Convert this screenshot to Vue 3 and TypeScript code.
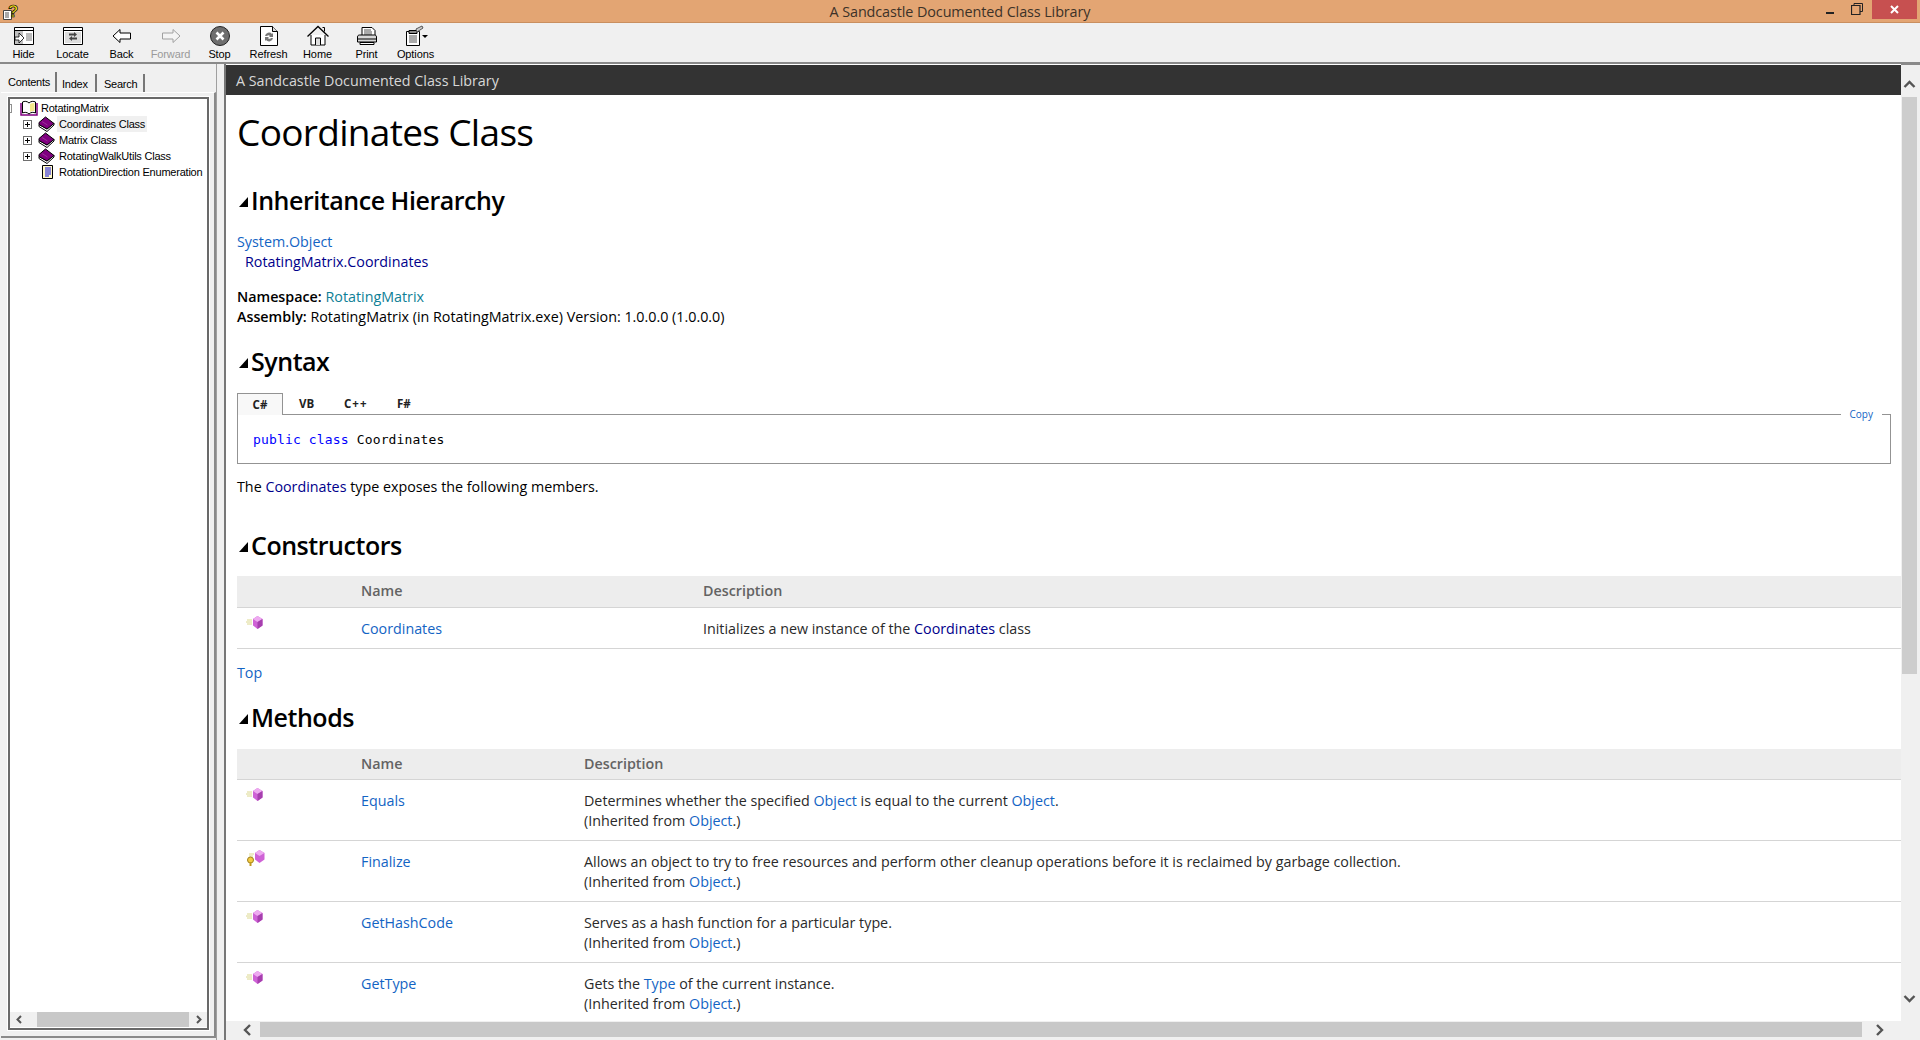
<script setup lang="ts">
interface ToolButton {
  label: string;
  icon: string;
  disabled?: boolean;
}

interface MethodRow {
  name: string;
  protectedMember?: boolean;
  parts: { text: string; link?: boolean }[];
}

const toolButtons: ToolButton[] = [
  { label: "Hide", icon: "hide" },
  { label: "Locate", icon: "locate" },
  { label: "Back", icon: "back" },
  { label: "Forward", icon: "forward", disabled: true },
  { label: "Stop", icon: "stop" },
  { label: "Refresh", icon: "refresh" },
  { label: "Home", icon: "home" },
  { label: "Print", icon: "print" },
  { label: "Options", icon: "options" }
];

const treeRows = [
  { label: "Coordinates Class", selected: true },
  { label: "Matrix Class", selected: false },
  { label: "RotatingWalkUtils Class", selected: false }
];

const methods: MethodRow[] = [
  {
    name: "Equals",
    parts: [
      { text: "Determines whether the specified " },
      { text: "Object", link: true },
      { text: " is equal to the current " },
      { text: "Object", link: true },
      { text: "." }
    ]
  },
  {
    name: "Finalize",
    protectedMember: true,
    parts: [{ text: "Allows an object to try to free resources and perform other cleanup operations before it is reclaimed by garbage collection." }]
  },
  {
    name: "GetHashCode",
    parts: [{ text: "Serves as a hash function for a particular type." }]
  },
  {
    name: "GetType",
    parts: [
      { text: "Gets the " },
      { text: "Type", link: true },
      { text: " of the current instance." }
    ]
  }
];
</script>

<template>
  <div class="window">
    <svg class="defs" width="0" height="0">
      <symbol id="member" viewBox="0 0 18 14">
        <path d="M1 5h5M0 7h6M1 9h5" stroke="#dcd890" stroke-width="1" fill="none" />
        <path d="M11.500 1L16.500 4v6.500L11.500 14 7 10.500V4z" fill="#cf62d6" />
        <path d="M11.500 1L16.500 4l-5 3L7 4z" fill="#eeaaf0" />
        <path d="M11.500 7L16.500 4v6.500L11.500 14z" fill="#a63fae" />
      </symbol>
      <symbol id="book" viewBox="0 0 17 16">
        <path d="M1 10.500l8 5 7-6.500V7L9 13 1 8.500z" fill="#fff" stroke="#000" stroke-width="1" stroke-linejoin="round" />
        <path d="M1 6.500L7.500 1 16 7.500 9 13 1 8.500z" fill="#800080" stroke="#000" stroke-width="1" stroke-linejoin="round" />
        <path d="M4 5.500l5.500 3.500" fill="none" stroke="#a040a0" stroke-width=".8" />
      </symbol>
    </svg>

    <header class="titlebar">
      <svg class="app-icon" width="18" height="18" viewBox="0 0 18 18">
        <path d="M2.500 7.500h8v9h-8z" fill="#fff" stroke="#444" />
        <path d="M4 10h4M4 12h4M4 14h4" stroke="#555" />
        <text x="7" y="14" class="q-mark">?</text>
      </svg>
      <span class="title-text">A Sandcastle Documented Class Library</span>
      <div class="win-controls">
        <svg width="10" height="4" viewBox="0 0 10 4" class="win-min"><path d="M1 2h8" stroke="#222" stroke-width="2" /></svg>
        <svg width="12" height="12" viewBox="0 0 12 12" class="win-max">
          <path d="M3 2.500V.5h8.500v8H9" fill="none" stroke="#222" />
          <path d="M.5 2.500h8.500v9H.5z" fill="none" stroke="#222" stroke-width="1.200" />
        </svg>
        <div class="win-close">
          <svg width="9" height="9" viewBox="0 0 9 9"><path d="M1 1l7 7M8 1l-7 7" stroke="#fff" stroke-width="2" /></svg>
        </div>
      </div>
    </header>

    <nav class="toolbar">
      <div v-for="btn in toolButtons" :key="btn.label" class="tool" :class="{ disabled: btn.disabled }">
        <svg width="24" height="24" viewBox="0 0 24 24" class="tool-icon">
          <g v-if="btn.icon === 'hide'">
            <path d="M2.500 3.500h19v17h-19z" fill="#fff" stroke="#000" />
            <path d="M2.500 6.500h19" stroke="#000" />
            <path d="M3 7h8v13H3z" fill="#c0c0c0" />
            <path d="M3 13h4V9l5 5-5 5v-3H3z" fill="#fff" stroke="#000" stroke-width=".8" />
            <path d="M14 10h6M14 12h6M14 14h6M14 16h6" stroke="#777" />
          </g>
          <g v-else-if="btn.icon === 'locate'">
            <path d="M2.500 3.500h19v17h-19z" fill="#fff" stroke="#000" />
            <path d="M2.500 6.500h19" stroke="#000" />
            <path d="M4 8h16v11H4z" fill="#dcdcdc" />
            <path d="M13 8l3 2.500-3 2.500v-1.500H8v-2h5zM11 12v1.500h5v2h-5V17l-3-2.500z" fill="#444" />
          </g>
          <path v-else-if="btn.icon === 'back'" d="M3 12l7-6.500V9h10.500v6H10v3.500z" fill="#fff" stroke="#000" />
          <path v-else-if="btn.icon === 'forward'" d="M21 12l-7-6.500V9H3.500v6H14v3.500z" fill="#f4f4f4" stroke="#a0a0a0" />
          <g v-else-if="btn.icon === 'stop'">
            <circle cx="12" cy="12" r="9.500" fill="#6e6e6e" stroke="#222" />
            <path d="M8.500 8.500l7 7M15.500 8.500l-7 7" stroke="#fff" stroke-width="2.600" />
          </g>
          <g v-else-if="btn.icon === 'refresh'">
            <path d="M3.500 2.500h12l5 5v14h-17z" fill="#fff" stroke="#000" />
            <path d="M15.500 2.500v5h5" fill="#ddd" stroke="#000" />
            <path d="M8 12a4 4 0 0 1 7-2l1-1v4h-4l1-1a2 2 0 0 0-3 0zM16 14a4 4 0 0 1-7 2l-1 1v-4h4l-1 1a2 2 0 0 0 3 0z" fill="#777" />
          </g>
          <g v-else-if="btn.icon === 'home'">
            <path d="M5 11v10h14V11" fill="#fff" stroke="#000" />
            <path d="M1.500 12.500L12 2.500l10.500 10" fill="none" stroke="#000" stroke-width="1.300" />
            <path d="M16.500 3.500h2v4" fill="none" stroke="#000" />
            <path d="M9.500 21v-7h5v7" fill="#ddd" stroke="#000" />
          </g>
          <g v-else-if="btn.icon === 'print'">
            <path d="M7 12V3.500h10l3 3V12z" fill="#fff" stroke="#000" />
            <path d="M9 6h7M9 8h8M9 10h8" stroke="#555" />
            <path d="M2.500 13c0-1.500 1-2 2-2h15c1 0 2 .5 2 2v5h-19z" fill="#d8d8d8" stroke="#000" />
            <path d="M3 15h18" stroke="#000" />
            <path d="M5 18.500h14v2H5z" fill="#fff" stroke="#000" />
          </g>
          <g v-else>
            <path d="M2.500 7.500h13v14h-13z" fill="#fff" stroke="#000" />
            <path d="M5 6.500h8v3H5z" fill="#888" stroke="#000" />
            <path d="M5 12h8M5 14h8M5 16h8M5 18h8" stroke="#555" />
            <path d="M12 5l6-3 1 2-6 4z" fill="#ccc" stroke="#555" />
            <path d="M18 11h6l-3 3z" fill="#000" />
          </g>
        </svg>
        <span class="tool-label">{{ btn.label }}</span>
      </div>
    </nav>

    <div class="main">
      <aside class="sidebar">
        <div class="side-tabs">
          <span class="side-tab active">Contents</span>
          <span class="side-tab idx">Index</span>
          <span class="side-tab srch">Search</span>
        </div>
        <div class="side-panel">
          <div class="tree-box">
            <div class="tree">
              <div class="tree-row root">
                <span class="root-stub"></span>
                <svg width="18" height="16" viewBox="0 0 18 16" class="tree-root-icon">
                  <path d="M1 3v12h16V3" fill="#fff" stroke="#800080" stroke-width="1.500" />
                  <path d="M2.500 2c2-1 4.500-1 6.500 1 2-2 4.500-2 6.500-1v11c-2-1-4.500-1-6.500 1-2-2-4.500-2-6.500-1z" fill="#fff" stroke="#000" />
                  <path d="M10 4c1-1 3-1 4.500-1v8c-2 0-3.500 0-4.500 1z" fill="#f4e88a" />
                </svg>
                <span class="tree-text">RotatingMatrix</span>
              </div>
              <div v-for="row in treeRows" :key="row.label" class="tree-row">
                <span class="plus"></span>
                <svg width="17" height="16" class="tree-book"><use href="#book" /></svg>
                <span class="tree-text" :class="{ selected: row.selected }">{{ row.label }}</span>
              </div>
              <div class="tree-row">
                <span class="plus blank"></span>
                <svg width="17" height="16" viewBox="0 0 17 16" class="tree-book">
                  <path d="M4.500 1.500h10v13h-10z" fill="#fff8c8" stroke="#000" />
                  <path d="M7 4h6M7 6h6M7 8h6M7 10h6M7 12h4" stroke="#1010e0" />
                </svg>
                <span class="tree-text">RotationDirection Enumeration</span>
              </div>
            </div>
            <div class="side-hscroll">
              <svg width="17" height="15" viewBox="0 0 17 15"><path d="M10 4L6.500 7.500 10 11" fill="none" stroke="#555" stroke-width="2" /></svg>
              <div class="side-thumb"></div>
              <svg width="17" height="15" viewBox="0 0 17 15"><path d="M7 4l3.500 3.500L7 11" fill="none" stroke="#555" stroke-width="2" /></svg>
            </div>
          </div>
        </div>
      </aside>

      <div class="splitter"></div>

      <section class="content">
        <div class="page-area">
          <div class="banner">A Sandcastle Documented Class Library</div>
          <div class="page">
            <h1>Coordinates Class</h1>

            <h2 class="first"><i class="caret"></i>Inheritance Hierarchy</h2>
            <div class="hierarchy">
              <a class="link">System.Object</a>
              <div class="indent navy">RotatingMatrix.Coordinates</div>
            </div>
            <div class="meta">
              <div><b>Namespace:</b> <a class="teal">RotatingMatrix</a></div>
              <div><b>Assembly:</b> RotatingMatrix (in RotatingMatrix.exe) Version: 1.0.0.0 (1.0.0.0)</div>
            </div>

            <h2 class="syntax"><i class="caret"></i>Syntax</h2>
            <div class="code-tabs">
              <span class="code-tab active">C#</span>
              <span class="code-tab vb">VB</span>
              <span class="code-tab cpp">C++</span>
              <span class="code-tab">F#</span>
            </div>
            <div class="code-box">
              <span class="copy">Copy</span>
              <code><span class="kw">public class</span> Coordinates</code>
            </div>
            <p class="members">The <a class="navy">Coordinates</a> type exposes the following members.</p>

            <h2 class="ctors"><i class="caret"></i>Constructors</h2>
            <table class="ctor-table">
              <thead>
                <tr><th class="icon-col"></th><th class="name-ctor">Name</th><th>Description</th></tr>
              </thead>
              <tbody>
                <tr>
                  <td><svg width="18" height="14" class="member"><use href="#member" /></svg></td>
                  <td><a class="link">Coordinates</a></td>
                  <td>Initializes a new instance of the <a class="navy">Coordinates</a> class</td>
                </tr>
              </tbody>
            </table>
            <div class="top-link"><a class="link">Top</a></div>

            <h2 class="methods"><i class="caret"></i>Methods</h2>
            <table class="method-table">
              <thead>
                <tr><th class="icon-col"></th><th class="name-method">Name</th><th>Description</th></tr>
              </thead>
              <tbody>
                <tr v-for="m in methods" :key="m.name">
                  <td>
                    <svg v-if="m.protectedMember" width="20" height="18" viewBox="0 0 20 18" class="member prot">
                      <path d="M3 5h5M3 7h4" stroke="#dcd890" />
                      <path d="M13.500 1L18.500 4v6.500L13.500 14 9 10.500V4z" fill="#cf62d6" />
                      <path d="M13.500 1L18.500 4l-5 3L9 4z" fill="#eeaaf0" />
                      <circle cx="4.500" cy="11" r="3" fill="#f4cc40" stroke="#a08020" />
                      <path d="M4.500 13v4" stroke="#c09a20" stroke-width="2" />
                    </svg>
                    <svg v-else width="18" height="14" class="member"><use href="#member" /></svg>
                  </td>
                  <td><a class="link">{{ m.name }}</a></td>
                  <td>
                    <template v-for="(p, i) in m.parts" :key="i"><a v-if="p.link" class="link">{{ p.text }}</a><template v-else>{{ p.text }}</template></template>
                    <br />(Inherited from <a class="link">Object</a>.)
                  </td>
                </tr>
              </tbody>
            </table>
          </div>
        </div>

        <div class="vscroll">
          <svg width="17" height="16" viewBox="0 0 17 16"><path d="M3.500 10l5-5 5 5" fill="none" stroke="#555" stroke-width="2.400" /></svg>
          <div class="vthumb"></div>
          <svg width="17" height="16" viewBox="0 0 17 16"><path d="M3.500 5l5 5 5-5" fill="none" stroke="#555" stroke-width="2.400" /></svg>
        </div>
        <div class="hscroll">
          <svg width="17" height="16" viewBox="0 0 17 16"><path d="M11 3L6 8l5 5" fill="none" stroke="#555" stroke-width="2.400" /></svg>
          <div class="hthumb"></div>
          <svg width="17" height="16" viewBox="0 0 17 16"><path d="M6 3l5 5-5 5" fill="none" stroke="#555" stroke-width="2.400" /></svg>
        </div>
        <div class="corner"></div>
      </section>
    </div>
  </div>
</template>

<style scoped>
.defs {
  position: absolute;
}

.window {
  width: 1920px;
  height: 1040px;
  display: flex;
  flex-direction: column;
  overflow: hidden;
  background: #f0f0f0;
  font-family: "Open Sans", "Noto Sans", sans-serif;
}

.titlebar {
  height: 22px;
  flex: none;
  display: flex;
  align-items: center;
  position: relative;
  background: #e3a573;
  border-bottom: 1px solid #c98f5f;
}

.app-icon {
  margin: 1px 0 0 1px;
}

.q-mark {
  font: bold 17px "Liberation Sans", sans-serif;
  fill: #f4e01c;
  stroke: #000;
  stroke-width: 0.7px;
}

.title-text {
  position: absolute;
  left: 0;
  right: 0;
  text-align: center;
  font-size: 14.400px;
  color: #3c3228;
  letter-spacing: -0.1px;
}

.win-controls {
  margin-left: auto;
  display: flex;
  align-items: center;
  height: 19px;
  align-self: flex-start;
}

.win-min {
  margin: 6px 0 0 0;
}

.win-max {
  margin: 0 0 2px 16px;
}

.win-close {
  width: 45px;
  height: 19px;
  margin-right: 3px;
  margin-left: 9px;
  background: #c75050;
  display: flex;
  align-items: center;
  justify-content: center;
}

.toolbar {
  height: 41px;
  flex: none;
  display: flex;
  margin-left: -1px;
  background: #f0f0f0;
  border-bottom: 2px solid #8a8a8a;
  box-sizing: border-box;
}

.tool {
  width: 49px;
  display: flex;
  flex-direction: column;
  align-items: center;
  color: #000;
}

.tool.disabled {
  color: #9a9a9a;
}

.tool-icon {
  margin-top: 1px;
}

.tool-label {
  font: 11px/13px "Liberation Sans", sans-serif;
  letter-spacing: -0.1px;
}

.main {
  flex: 1;
  display: flex;
  min-height: 0;
}

.sidebar {
  width: 216px;
  flex: none;
  box-sizing: border-box;
  padding: 7px 0 2px 1px;
  display: flex;
  flex-direction: column;
  background: #f0f0f0;
}

.side-tabs {
  display: flex;
  height: 21px;
  padding-left: 5px;
  align-items: flex-end;
}

.side-tab {
  font: 11px/17px "Liberation Sans", sans-serif;
  letter-spacing: -0.25px;
  color: #000;
  padding: 2px 0 0 3px;
  margin-left: 2px;
  border-right: 2px solid #777;
  height: 18px;
  box-sizing: border-box;
}

.side-tab.active {
  width: 52px;
  height: 20px;
  margin-left: -1px;
  background: #f0f0f0;
}

.side-tab.idx {
  width: 38px;
}

.side-tab.srch {
  width: 46px;
  padding-left: 5px;
}

.side-panel {
  flex: 1;
  min-height: 0;
  box-sizing: border-box;
  border-top: 1px solid #fff;
  border-right: 2px solid #8a8a8a;
  border-bottom: 2px solid #8a8a8a;
  padding: 4px 5px 6px 7px;
}

.tree-box {
  height: 100%;
  box-sizing: border-box;
  border: 2px solid #696969;
  outline: 1px solid #fff;
  background: #fff;
  display: flex;
  flex-direction: column;
}

.tree {
  flex: 1;
  padding-top: 1px;
}

.tree-row {
  height: 16px;
  display: flex;
  align-items: center;
  padding-left: 13px;
}

.tree-row.root {
  padding-left: 0;
}

.root-stub {
  width: 2px;
  height: 9px;
  flex: none;
  box-sizing: border-box;
  border: 1px solid #909090;
  border-left: 0;
  margin-right: 8px;
}

.tree-root-icon {
  flex: none;
  margin-right: 1px;
}

.tree-text {
  font: 11px/16px "Liberation Sans", sans-serif;
  letter-spacing: -0.22px;
  color: #000;
  white-space: nowrap;
  padding: 0 2px;
}

.tree-text.selected {
  background: #f0f0f0;
}

.plus {
  width: 9px;
  height: 9px;
  flex: none;
  box-sizing: border-box;
  border: 1px solid #6f6f6f;
  margin-right: 6px;
  background: linear-gradient(#000, #000) center / 5px 1px no-repeat, linear-gradient(#000, #000) center / 1px 5px no-repeat, #fff;
}

.plus.blank {
  border: 0;
  background: none;
}

.tree-book {
  flex: none;
  margin-right: 2px;
}

.side-hscroll {
  height: 15px;
  flex: none;
  margin-bottom: 1px;
  display: flex;
  align-items: center;
  background: #f0f0f0;
  padding: 0 0 0 1px;
}

.side-hscroll svg {
  flex: none;
}

.side-thumb {
  height: 15px;
  flex: 1;
  margin: 0 1px 0 9px;
  background: #c8c8c8;
}

.splitter {
  width: 10px;
  flex: none;
  box-sizing: border-box;
  border-left: 1px solid #a0a0a0;
  border-right: 2px solid #777;
  background: #f0f0f0;
}

.content {
  flex: 1;
  min-width: 0;
  display: grid;
  grid-template-columns: 1fr 19px;
  grid-template-rows: 1fr 17px;
  margin-bottom: 2px;
  background: #f0f0f0;
}

.page-area {
  overflow: hidden;
  background: #fff;
  font-size: 14.300px;
  line-height: 20px;
  color: #000;
  min-width: 0;
  min-height: 0;
}

.banner {
  height: 30px;
  margin-top: 1px;
  background: #333;
  color: #d8d8d8;
  font-size: 14.300px;
  line-height: 31px;
  padding-left: 10px;
}

.page {
  padding-left: 11px;
}

h1 {
  margin: 7px 0 0;
  height: 60px;
  font-size: 37px;
  line-height: 60px;
  font-weight: 400;
  letter-spacing: -0.68px;
  color: #000;
}

h2 {
  display: flex;
  align-items: center;
  height: 36px;
  font-size: 25px;
  line-height: 36px;
  font-weight: 600;
  letter-spacing: -0.46px;
  color: #000;
}

.caret {
  width: 0;
  height: 0;
  margin: 4px 3px 0 2px;
  border-style: solid;
  border-width: 0 0 10px 9px;
  border-color: transparent transparent #000 transparent;
}

h2.first {
  margin: 20px 0 0;
}

h2.syntax {
  margin: 16px 0 0;
}

h2.ctors {
  margin: 30px 0 0;
}

h2.methods {
  margin: 16px 0 0;
}

.hierarchy {
  margin-top: 14px;
}

.indent {
  padding-left: 8px;
}

.meta {
  margin-top: 15px;
}

.meta b {
  font-weight: 600;
}

.link {
  color: #1364c4;
}

.navy {
  color: #00008b;
}

.teal {
  color: #0e7f96;
}

.code-tabs {
  margin: 14px 0 0;
  height: 22px;
  display: flex;
  font-size: 11.500px;
  font-weight: 700;
  line-height: 21px;
  color: #222;
}

.code-tab {
  padding-left: 16px;
}

.code-tab.active {
  width: 46px;
  padding: 0;
  box-sizing: border-box;
  text-align: center;
  background: linear-gradient(#f8f8f8, #f8f8f8);
  border: 1px solid #939393;
  border-bottom: 0;
  position: relative;
  z-index: 1;
  height: 22px;
}

.code-tab.vb {
  width: 31px;
}

.code-tab.cpp {
  width: 37px;
  letter-spacing: 1px;
  padding-left: 14px;
}

.code-box {
  position: relative;
  height: 50px;
  margin: -1px 10px 0 0;
  box-sizing: border-box;
  border: 1px solid #939393;
  padding: 14px 15px 0;
}

.code-box code {
  font: 13px/20px "DejaVu Sans Mono", monospace;
  letter-spacing: 0.15px;
  color: #000;
}

.kw {
  color: #0000ff;
}

.copy {
  position: absolute;
  top: -8px;
  right: 8px;
  padding: 0 9px;
  background: #fff;
  font-size: 10px;
  line-height: 14px;
  color: #1364c4;
}

.members {
  margin: 13px 0 0;
}

table {
  width: 100%;
  border-collapse: collapse;
  table-layout: fixed;
}

.ctor-table {
  margin-top: 13px;
}

.method-table {
  margin-top: 14px;
}

th {
  height: 31px;
  padding: 0;
  background: #ededed;
  border-bottom: 1px solid #d5d5d5;
  box-sizing: border-box;
  text-align: left;
  font-weight: 600;
  color: #636363;
  font-size: 14.300px;
}

.icon-col {
  width: 124px;
}

.name-ctor {
  width: 342px;
}

.name-method {
  width: 223px;
}

td {
  padding: 11px 0 9px;
  vertical-align: top;
  border-bottom: 1px solid #d5d5d5;
  color: #2a2a2a;
}

.member {
  display: block;
  margin: -4px 0 0 9px;
}

.member.prot {
  margin-top: -3px;
}

.top-link {
  margin-top: 14px;
}

.vscroll {
  display: flex;
  flex-direction: column;
  align-items: center;
  background: #f0f0f0;
  padding: 12px 2px 14px 0;
  border-top: 1px solid #8a8a8a;
}

.vscroll svg {
  flex: none;
  margin-right: 1px;
}

.vthumb {
  width: 15px;
  height: 577px;
  background: #cdcdcd;
  margin: 4px 1px auto 0;
}

.hscroll {
  display: flex;
  align-items: center;
  background: #f0f0f0;
  padding: 0 13px;
}

.hscroll svg {
  flex: none;
}

.hthumb {
  height: 15px;
  flex: 1;
  margin: 0 9px 1px 4px;
  background: #c8c8c8;
}

.corner {
  background: #f0f0f0;
}
</style>

<style>
html,
body {
  margin: 0;
  overflow: hidden;
}
</style>
